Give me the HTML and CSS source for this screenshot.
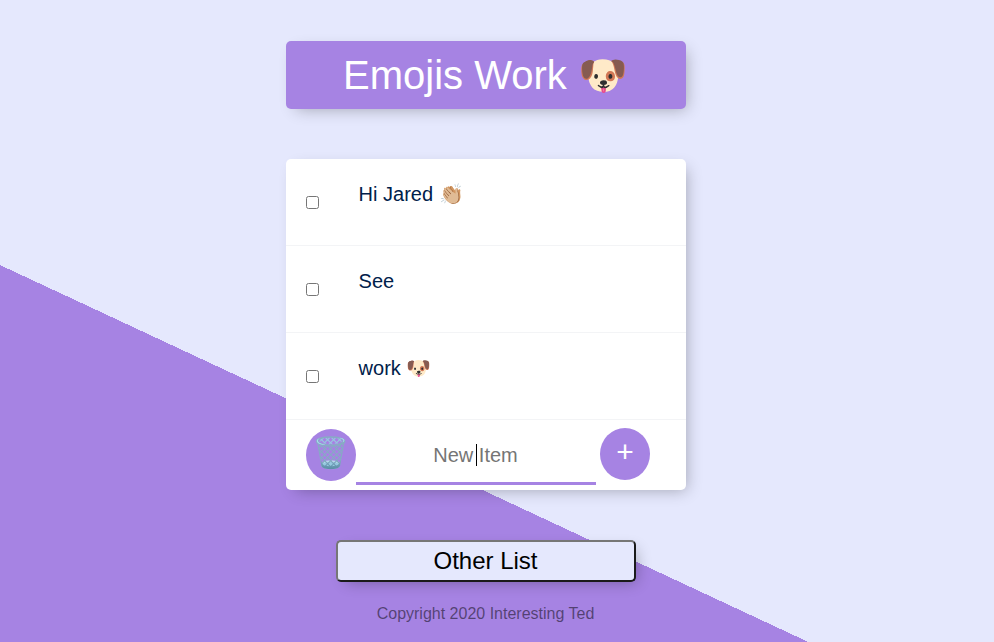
FILE: index.html
```html
<!DOCTYPE html>
<html lang="en">
<head>
<meta charset="utf-8">
<title>Emojis Work</title>
<link rel="stylesheet" href="styles.css">
</head>
<body>
<main>
<header class="box heading"><h1>Emojis Work 🐶</h1></header>
<section class="box list">
<div class="item"><input type="checkbox"><p>Hi Jared 👏🏼</p></div>
<div class="item"><input type="checkbox"><p>See</p></div>
<div class="item"><input type="checkbox"><p>work 🐶</p></div>
<form class="entry"><button type="button" class="round trash">🗑️</button><div class="field-wrap"><input class="field" type="text" placeholder="New Item" autocomplete="off"><span class="caret"></span></div><button type="button" class="round add">+</button></form>
</section>
<button class="other">Other List</button>
</main>
<footer>Copyright 2020 Interesting Ted</footer>
</body>
</html>
```
FILE: styles.css
```css
* { box-sizing: border-box; }
html { background: #e5e8fd; }
body { margin: 0; height: 642px; overflow: hidden; padding: 41px 0 0 286px; background: linear-gradient(25deg, #a683e3 34.1%, #e5e8fd 34.1%); font-family: "Liberation Sans", Arial, sans-serif; }
main { width: 400px; display: flex; flex-direction: column; }
.box { border-radius: 5px; box-shadow: 5px 5px 15px -5px rgba(0,0,0,.3); background: #fff; }
.heading { height: 68px; background: #a683e3; margin-bottom: 50px; text-align: center; }
h1 { margin: 0 1px 0 0; font-size: 40px; font-weight: 400; line-height: 68px; color: #fff; }
.item { height: 87px; display: flex; border-bottom: 1px solid #f3f4f6; }
.item input { width: 13px; height: 13px; margin: 37px 39.6px 0 20px; }
.item p { margin: 24px 0 0; font-size: 20px; line-height: 23px; color: #00204a; }
.entry { height: 70px; display: flex; align-items: flex-start; padding-left: 20px; }
.round { width: 50px; height: 52px; padding: 0 0 4px; border: 0; border-radius: 50%; background: #a683e3; color: #fff; font: 30px "Liberation Sans", sans-serif; }
.trash { margin-top: 9px; padding: 0 2px 6px 0; color: rgba(255,255,255,.9); }
.add { margin: 8px 0 0 4px; }
.field-wrap { position: relative; width: 240px; }
.field { display: block; width: 240px; height: 65px; padding: 8px 1px 0 0; border: 0; border-bottom: 3px solid #a683e3; outline: 0; text-align: center; font: 20px "Liberation Sans", sans-serif; background: transparent; }
.caret { position: absolute; left: 120px; top: 24px; width: 1px; height: 22px; background: #000; }
.other { align-self: center; width: 300px; height: 42px; margin-top: 50px; padding: 0 1px 0 0; border: 2px solid; border-color: #767676 #1a1a1a #1a1a1a #767676; border-radius: 5px; background: #e5e8fd; color: #000; font: 24px "Liberation Sans", sans-serif; box-shadow: 5px 5px 15px -5px rgba(0,0,0,.3); }
footer { width: 399px; margin-top: 23px; text-align: center; font-size: 16px; line-height: 18px; color: rgba(0,0,0,.5); }
```
